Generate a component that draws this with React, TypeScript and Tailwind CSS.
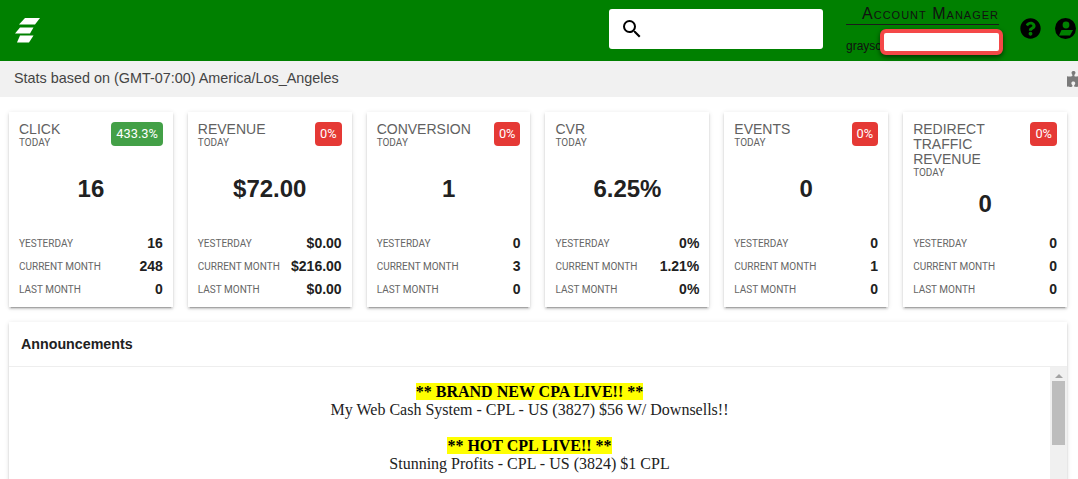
import { FaPuzzlePiece, FaQuestionCircle } from "react-icons/fa";
import { MdSearch } from "react-icons/md";

type Stat = {
  title: string;
  badge: string;
  good?: boolean;
  value: string;
  yesterday: string;
  month: string;
  lastMonth: string;
};

const stats: Stat[] = [
  { title: "CLICK", badge: "433.3%", good: true, value: "16", yesterday: "16", month: "248", lastMonth: "0" },
  { title: "REVENUE", badge: "0%", value: "$72.00", yesterday: "$0.00", month: "$216.00", lastMonth: "$0.00" },
  { title: "CONVERSION", badge: "0%", value: "1", yesterday: "0", month: "3", lastMonth: "0" },
  { title: "CVR", badge: "", value: "6.25%", yesterday: "0%", month: "1.21%", lastMonth: "0%" },
  { title: "EVENTS", badge: "0%", value: "0", yesterday: "0", month: "1", lastMonth: "0" },
  { title: "REDIRECT TRAFFIC REVENUE", badge: "0%", value: "0", yesterday: "0", month: "0", lastMonth: "0" },
];

function Row({ label, value }: { label: string; value: string }) {
  return (
    <div className="flex h-[23px] items-center justify-between">
      <span className="pt-[1px] font-['Roboto',sans-serif] text-[10px] text-[#666]">{label}</span>
      <span className="text-[14px] font-bold leading-none text-[#212121]">{value}</span>
    </div>
  );
}

function StatCard({ stat }: { stat: Stat }) {
  const tall = stat.title.length > 20;
  return (
    <div className="flex h-[195px] flex-col bg-white px-[10px] pb-[7px] pt-[10px] shadow-[0_2px_2px_rgba(0,0,0,0.14),0_3px_1px_-2px_rgba(0,0,0,0.2),0_1px_5px_rgba(0,0,0,0.12)]">
      <div className="flex items-start justify-between">
        <div className="w-[100px] text-[#616161]">
          <div className="text-[14px] leading-[15px]">{stat.title}</div>
          <div className="font-['Roboto',sans-serif] text-[10px] leading-[12px]">TODAY</div>
        </div>
        {stat.badge && (
          <span
            className={`rounded-[4px] px-[5px] font-['Roboto',sans-serif] text-[12.8px] leading-[24px] text-white ${
              stat.good ? "bg-[#43a047]" : "bg-[#e53935]"
            }`}
          >
            {stat.badge}
          </span>
        )}
      </div>
      <div
        className={`flex items-center justify-center text-[24px] font-bold leading-none text-[#212121] ${
          tall ? "h-[50px]" : "h-[79px]"
        }`}
      >
        {stat.value}
      </div>
      <div className="mt-auto">
        <Row label="YESTERDAY" value={stat.yesterday} />
        <Row label="CURRENT MONTH" value={stat.month} />
        <Row label="LAST MONTH" value={stat.lastMonth} />
      </div>
    </div>
  );
}

export default function App() {
  return (
    <div className="h-[479px] w-[1078px] overflow-hidden bg-white font-['Liberation_Sans',Arial,sans-serif]">
      {/* Header */}
      <header className="flex h-[61px] items-center bg-[#008000]">
        <svg className="ml-[15px] shrink-0" width="26" height="26" viewBox="0 0 26 26" fill="#fff">
          <polygon points="10,0 25,0 20,6.5 4,6.5" />
          <polygon points="5,9.5 18.5,9.5 15,15.5 0,15.5" />
          <polygon points="5,17.5 18.5,17.5 14,24.5 2,24.5" />
        </svg>
        <div className="mb-[3px] ml-[568px] flex h-[40px] w-[214px] items-center rounded-[3px] bg-white pl-[11px]">
          <MdSearch className="text-black" size={24} />
        </div>
        <div className="relative ml-[23px] h-[61px] w-[153px]">
          <div className="flex h-[25px] items-end justify-end border-b border-[#1b1b1b] pb-[2px] text-[16px] leading-none tracking-[1px] text-[#111] [font-variant:small-caps]">
            Account Manager
          </div>
          <div className="mt-[14px] text-[12px] leading-[14px] text-[#111]">graysc</div>
          <div className="absolute left-[34px] top-[29px] h-[26px] w-[123px] rounded-[6px] border-[4px] border-[#f44848] bg-white shadow-[0_2px_5px_rgba(0,0,0,0.6)]" />
        </div>
        <FaQuestionCircle className="mb-[4px] ml-[21px] shrink-0 text-black" size={21} />
        <svg className="mb-[4px] ml-[14px] shrink-0" width="21" height="21" viewBox="0 0 21 21">
          <circle cx="10.5" cy="10.5" r="10.5" fill="#000" />
          <circle cx="11" cy="7" r="3.4" fill="#008000" />
          <polygon points="6.5,12 18,12 15,17.5 4,17.5" fill="#008000" />
        </svg>
      </header>

      {/* Timezone bar */}
      <div className="flex h-[36px] items-center justify-between bg-[#f1f1f1] pl-[14px] text-[14.4px] text-[#444]">
        <span>Stats based on (GMT-07:00) America/Los_Angeles</span>
        <FaPuzzlePiece className="mr-[-7px] text-[#7a7a7a]" size={18} />
      </div>

      {/* Stat cards */}
      <div className="grid grid-cols-6 gap-[15px] pl-[9px] pr-[11px] pt-[15px]">
        {stats.map((stat) => (
          <StatCard key={stat.title} stat={stat} />
        ))}
      </div>

      {/* Announcements */}
      <section className="ml-[9px] mr-[11px] mt-[15px] bg-white shadow-[0_2px_2px_rgba(0,0,0,0.14),0_3px_1px_-2px_rgba(0,0,0,0.2),0_1px_5px_rgba(0,0,0,0.12)]">
        <div className="flex h-[45px] items-center border-b border-[#eee] pl-[12px] pt-[1px] text-[14.25px] font-bold text-[#212121]">
          Announcements
        </div>
        <div className="flex h-[200px]">
          <div className="flex-1 pt-[16px] text-center font-['Liberation_Serif',serif] text-[16px] leading-[18px] text-[#222]">
            <p>
              <b className="bg-[#ffff00] text-black">** BRAND NEW CPA LIVE!! **</b>
            </p>
            <p>My Web Cash System - CPL - US (3827) $56 W/ Downsells!!</p>
            <p className="mt-[18px]">
              <b className="bg-[#ffff00] text-black">** HOT CPL LIVE!! **</b>
            </p>
            <p>Stunning Profits - CPL - US (3824) $1 CPL</p>
          </div>
          <div className="flex w-[17px] flex-col items-center bg-[#f0f0f0] pt-[7px]">
            <div className="h-0 w-0 border-x-[4px] border-b-[4px] border-x-transparent border-b-[#a3a3a3]" />
            <div className="mt-[3px] h-[64px] w-[13px] bg-[#bdbdbd]" />
          </div>
        </div>
      </section>
    </div>
  );
}
